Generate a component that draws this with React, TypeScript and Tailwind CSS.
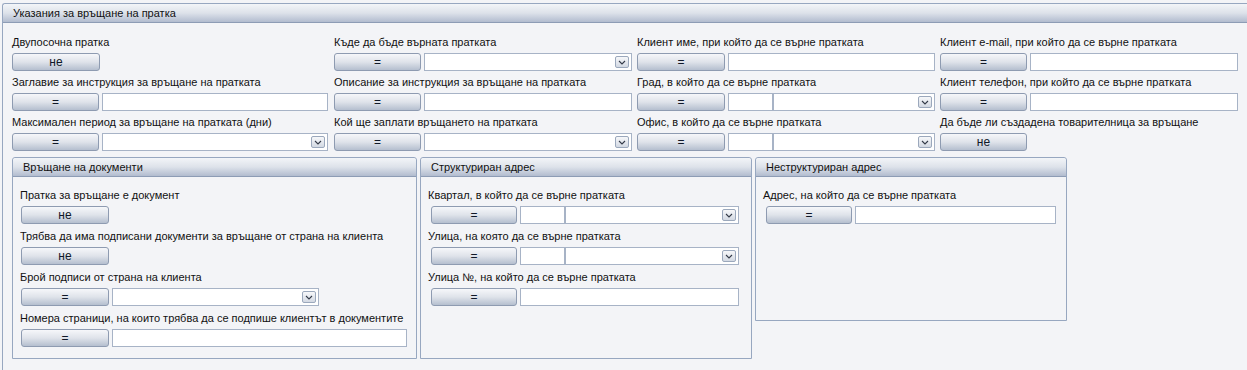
import React from "react";

const font = { fontFamily: '"Liberation Sans", Arial, sans-serif' };

function Btn({ text = "=", w = 88 }: { text?: string; w?: number }) {
  return (
    <div
      className="shrink-0 h-[18px] rounded-[3px] border border-[#8e9bb1] bg-linear-to-b from-[#f6f7fa] via-[#dfe3ea] to-[#b5bfcf] text-center text-[12px] leading-[16px] text-[#101828]"
      style={{ width: w }}
    >
      {text}
    </div>
  );
}

function TextBox({ w }: { w: number }) {
  return (
    <div
      className="shrink-0 h-[18px] border border-[#a7b3c6] bg-white"
      style={{ width: w }}
    />
  );
}

function Select({ w }: { w: number }) {
  return (
    <div
      className="relative shrink-0 h-[18px] border border-[#a7b3c6] bg-white"
      style={{ width: w }}
    >
      <div className="absolute right-[2px] top-[2px] flex h-[12px] w-[14px] items-center justify-center rounded-[2px] border border-[#9ba8bc] bg-linear-to-b from-[#f7f8fa] to-[#d3d9e3]">
        <svg width="8" height="5" viewBox="0 0 8 5">
          <path d="M1 1 L4 4 L7 1" fill="none" stroke="#333a48" strokeWidth="1.1" />
        </svg>
      </div>
    </div>
  );
}

function Field({
  label,
  children,
  inset = 0,
}: {
  label: string;
  children: React.ReactNode;
  inset?: number;
}) {
  return (
    <div className="flex flex-col">
      <div className="h-[15px] whitespace-nowrap text-[11px] leading-[15px] text-[#111]">
        {label}
      </div>
      <div className="mt-[3px] flex h-[18px] gap-[3px]" style={{ marginLeft: inset }}>
        {children}
      </div>
    </div>
  );
}

function HeaderBar({ title, pad }: { title: string; pad: string }) {
  return (
    <div
      className={`h-[19px] rounded-t-[3px] border-b border-[#8d9cb5] bg-linear-to-b from-[#f3f5f8] via-[#dde2ea] to-[#b2bccf] text-[11px] leading-[18px] text-[#111] ${pad}`}
    >
      {title}
    </div>
  );
}

function SubPanel({
  title,
  width,
  height,
  children,
}: {
  title: string;
  width: number;
  height: number;
  children: React.ReactNode;
}) {
  return (
    <div
      className="shrink-0 rounded-t-[3px] border border-[#97a7c0] bg-[#f3f4f7]"
      style={{ width, height }}
    >
      <HeaderBar title={title} pad="pl-[10px]" />
      <div className="flex flex-col gap-[5px] pl-[7px] pt-[11px]">{children}</div>
    </div>
  );
}

export default function App() {
  return (
    <div className="h-[370px] w-[1247px] overflow-hidden bg-[#f3f4f7] pt-[3px]" style={font}>
      <div className="ml-[2px] h-[400px] rounded-tl-[3px] border-l border-t border-[#97a7c0]">
        <HeaderBar title="Указания за връщане на пратка" pad="pl-[10px]" />

        <div className="pl-[9px] pt-[12px]">
          {/* Основни полета */}
          <div className="grid grid-cols-[322px_303px_303px_303px] gap-y-[4px]">
            <Field label="Двупосочна пратка">
              <Btn text="не" />
            </Field>
            <Field label="Къде да бъде върната пратката">
              <Btn w={87} />
              <Select w={208} />
            </Field>
            <Field label="Клиент име, при който да се върне пратката">
              <Btn />
              <TextBox w={207} />
            </Field>
            <Field label="Клиент e-mail, при който да се върне пратката">
              <Btn w={87} />
              <TextBox w={208} />
            </Field>

            <Field label="Заглавие за инструкция за връщане на пратката">
              <Btn w={87} />
              <TextBox w={226} />
            </Field>
            <Field label="Описание за инструкция за връщане на пратката">
              <Btn w={87} />
              <TextBox w={208} />
            </Field>
            <Field label="Град, в който да се върне пратката">
              <Btn />
              <div className="flex">
                <TextBox w={45} />
                <Select w={162} />
              </div>
            </Field>
            <Field label="Клиент телефон, при който да се върне пратката">
              <Btn w={87} />
              <TextBox w={208} />
            </Field>

            <Field label="Максимален период за връщане на пратката (дни)">
              <Btn w={87} />
              <Select w={226} />
            </Field>
            <Field label="Кой ще заплати връщането на пратката">
              <Btn w={87} />
              <Select w={208} />
            </Field>
            <Field label="Офис, в който да се върне пратката">
              <Btn />
              <div className="flex">
                <TextBox w={45} />
                <Select w={162} />
              </div>
            </Field>
            <Field label="Да бъде ли създадена товарителница за връщане">
              <Btn text="не" w={87} />
            </Field>
          </div>

          {/* Подпанели */}
          <div className="mt-[6px] flex items-start gap-[3px]">
            <SubPanel title="Връщане на документи" width={405} height={202}>
              <Field label="Пратка за връщане е документ" inset={1}>
                <Btn text="не" />
              </Field>
              <Field label="Трябва да има подписани документи за връщане от страна на клиента" inset={1}>
                <Btn text="не" />
              </Field>
              <Field label="Брой подписи от страна на клиента" inset={1}>
                <Btn />
                <Select w={207} />
              </Field>
              <Field label="Номера страници, на които трябва да се подпише клиентът в документите" inset={1}>
                <Btn />
                <TextBox w={295} />
              </Field>
            </SubPanel>

            <SubPanel title="Структуриран адрес" width={332} height={202}>
              <Field label="Квартал, в който да се върне пратката" inset={3}>
                <Btn w={86} />
                <div className="flex">
                  <TextBox w={45} />
                  <Select w={174} />
                </div>
              </Field>
              <Field label="Улица, на която да се върне пратката" inset={3}>
                <Btn w={86} />
                <div className="flex">
                  <TextBox w={45} />
                  <Select w={174} />
                </div>
              </Field>
              <Field label="Улица №, на който да се върне пратката" inset={3}>
                <Btn w={86} />
                <TextBox w={219} />
              </Field>
            </SubPanel>

            <SubPanel title="Неструктуриран адрес" width={312} height={164}>
              <Field label="Адрес, на който да се върне пратката" inset={3}>
                <Btn w={86} />
                <TextBox w={201} />
              </Field>
            </SubPanel>
          </div>
        </div>
      </div>
    </div>
  );
}
